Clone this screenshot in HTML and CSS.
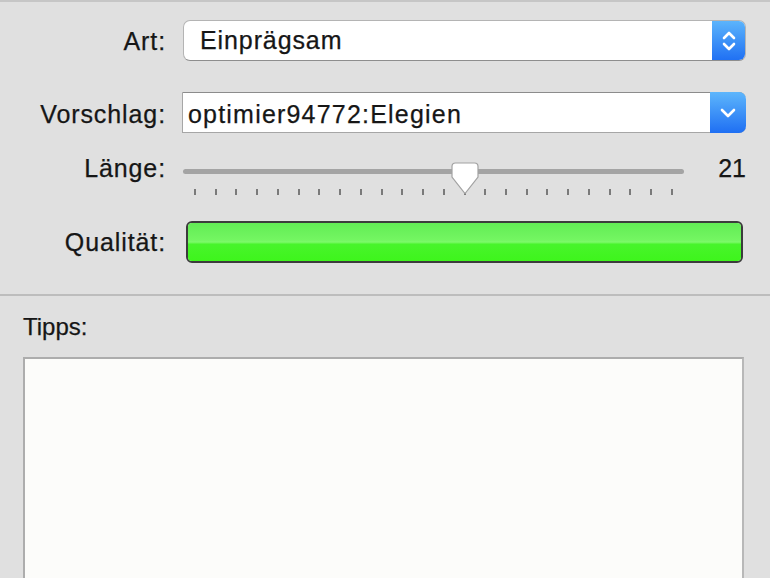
FILE: index.html
```html
<!DOCTYPE html>
<html lang="de">
<head>
<meta charset="utf-8">
<title>Kennwortassistent</title>
<link rel="stylesheet" href="styles.css">
</head>
<body>
<div class="window">
  <section class="form">
    <div class="row row-art">
      <label class="label">Art:</label>
      <div class="popup">
        <span class="popup-text">Einprägsam</span>
        <span class="popup-btn">
          <svg width="34" height="41" viewBox="0 0 34 41"><path d="M12 18 L17 13 L22 18 M12 24 L17 29 L22 24" fill="none" stroke="#fff" stroke-width="2.6" stroke-linecap="round" stroke-linejoin="round"/></svg>
        </span>
      </div>
    </div>
    <div class="row row-vorschlag">
      <label class="label">Vorschlag:</label>
      <div class="combo">
        <span class="combo-text">optimier94772:Elegien</span>
        <span class="combo-btn">
          <svg width="36" height="41" viewBox="0 0 36 41"><path d="M12 18 L18 24 L24 18" fill="none" stroke="#fff" stroke-width="2.6" stroke-linecap="round" stroke-linejoin="round"/></svg>
        </span>
      </div>
    </div>
    <div class="row row-laenge">
      <label class="label">Länge:</label>
      <div class="slider-wrap">
        <div class="slider">
          <div class="track"></div>
          <svg class="knob" width="28" height="33" viewBox="0 0 28 33"><path d="M4.5 1 H23.5 Q27 1 27 4.5 V15 L14 31.5 L1 15 V4.5 Q1 1 4.5 1 Z" fill="#fff" stroke="#a2a2a2" stroke-width="1.2"/></svg>
          <div class="ticks">
            <i></i><i></i><i></i><i></i><i></i><i></i><i></i><i></i><i></i><i></i><i></i><i></i>
            <i></i><i></i><i></i><i></i><i></i><i></i><i></i><i></i><i></i><i></i><i></i><i></i>
          </div>
        </div>
        <span class="value">21</span>
      </div>
    </div>
    <div class="row row-qualitaet">
      <label class="label">Qualität:</label>
      <div class="meter"><div class="meter-fill"></div></div>
    </div>
  </section>
  <hr class="separator">
  <section class="tips">
    <div class="tips-label">Tipps:</div>
    <div class="tips-box"></div>
  </section>
</div>
</body>
</html>
```
FILE: styles.css
```css
html, body {
  margin: 0;
  padding: 0;
  height: 100%;
  overflow: hidden;
}
body {
  background: #e0e0e0;
  font-family: "Liberation Sans", Arial, sans-serif;
  color: #161616;
  -webkit-text-stroke: 0.25px #161616;
}
.window {
  border-top: 2px solid #c6c6c6;
}
.form {
  display: flex;
  flex-direction: column;
}
.row {
  display: flex;
  align-items: center;
}
.label {
  width: 166px;
  text-align: right;
  font-size: 25px;
  letter-spacing: 0.9px;
  line-height: 30px;
  flex: none;
}
.row-art {
  margin-top: 18px;
  height: 41px;
}
.row-vorschlag {
  margin-top: 31px;
  height: 41px;
}
.row-vorschlag .label {
  padding-top: 3px;
}
.row-laenge {
  margin-top: 20px;
  height: 44px;
  align-items: flex-start;
}
.row-qualitaet {
  margin-top: 24px;
  height: 42px;
}

.popup {
  margin-left: 17px;
  width: 563px;
  height: 41px;
  box-sizing: border-box;
  display: flex;
  align-items: stretch;
  background: #fff;
  border: 1px solid #b4b4b4;
  border-bottom-color: #8e8e8e;
  border-radius: 7px;
  overflow: hidden;
}
.popup-text {
  flex: 1;
  padding-left: 16px;
  font-size: 25px;
  letter-spacing: 0.9px;
  line-height: 39px;
}
.popup-btn {
  width: 34px;
  margin: -1px -1px -1px 0;
  background: linear-gradient(#5db6fc, #1f6ff3);
  display: flex;
  align-items: center;
  justify-content: center;
}

.combo {
  margin-left: 16px;
  width: 564px;
  height: 41px;
  box-sizing: border-box;
  display: flex;
  background: #fff;
  border: 1px solid #a6a6a6;
  border-top-color: #8c8c8c;
  border-right: none;
  border-radius: 0 7px 7px 0;
}
.combo-text {
  flex: 1;
  padding: 3px 0 0 5px;
  font-size: 25px;
  letter-spacing: 1.2px;
  line-height: 36px;
}
.combo-btn {
  width: 36px;
  margin: -1px 0 -1px 0;
  background: linear-gradient(#5db6fc, #1f6ff3);
  border-radius: 0 7px 7px 0;
  display: flex;
  align-items: center;
  justify-content: center;
}

.slider-wrap {
  margin-left: 17px;
  width: 563px;
  display: flex;
  align-items: flex-start;
}
.slider {
  position: relative;
  width: 501px;
  padding-top: 16px;
}
.track {
  height: 5px;
  background: #a4a4a4;
  border-radius: 3px;
}
.knob {
  position: absolute;
  left: 268px;
  top: 9px;
}
.ticks {
  display: flex;
  justify-content: space-between;
  padding: 0 11px;
  margin-top: 15px;
}
.ticks i {
  display: block;
  width: 2px;
  height: 6px;
  background: #7a7a7a;
}
.value {
  margin-left: auto;
  font-size: 25px;
  line-height: 30px;
}

.meter {
  margin-left: 20px;
  width: 557px;
  height: 42px;
  box-sizing: border-box;
  border: 2px solid #3c3c3c;
  border-radius: 6px;
  overflow: hidden;
  background: #4af22c;
}
.meter-fill {
  height: 100%;
  background: linear-gradient(#62ec55 0%, #74f662 45%, #7dfa6a 50%, #48f42b 56%, #3ef51c 100%);
}

.separator {
  margin: 31px 0 0 0;
  border: none;
  height: 2px;
  background: #bdbdbd;
}
.tips {
  padding: 0 26px 0 23px;
}
.tips-label {
  margin-top: 16px;
  font-size: 24px;
  line-height: 30px;
}
.tips-box {
  margin-top: 15px;
  height: 300px;
  background: #fcfcfa;
  border: 2px solid #adadad;
  border-right-color: #b8b8b8;
}
```
